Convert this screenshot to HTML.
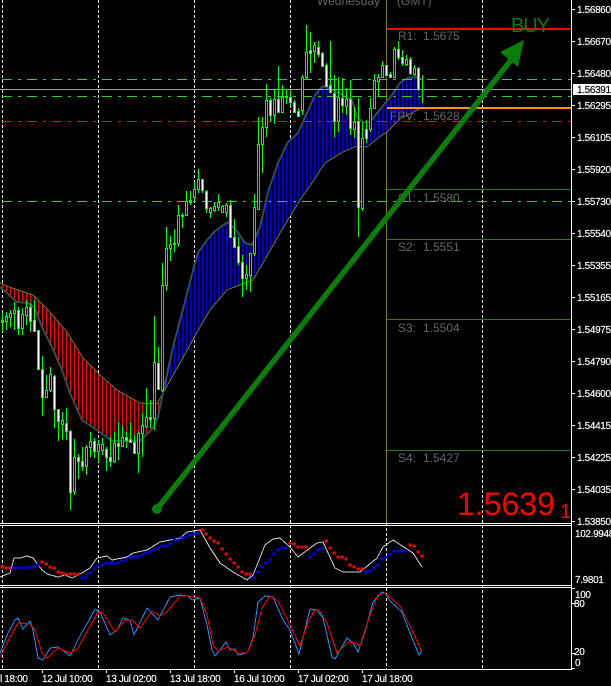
<!DOCTYPE html>
<html><head><meta charset="utf-8"><title>Chart</title>
<style>html,body{margin:0;padding:0;background:#000;width:611px;height:686px;overflow:hidden}svg{display:block}
text{font-family:"Liberation Sans",sans-serif}
.a text{font-size:10px;fill:#fff;stroke:#fff;stroke-width:.15px;letter-spacing:-.35px}
.p text{font-size:12px;fill:#666}
</style></head><body>
<svg width="611" height="686" viewBox="0 0 611 686" xmlns="http://www.w3.org/2000/svg">
<defs>
<pattern id="r" width="4" height="4" patternUnits="userSpaceOnUse"><rect x="2" width="1" height="4" fill="#f00"/></pattern>
<pattern id="b" width="4" height="4" patternUnits="userSpaceOnUse"><rect x="2" width="1" height="4" fill="#00f"/></pattern>
</defs>
<rect width="611" height="686" fill="#000"/>
<g fill="none" shape-rendering="crispEdges">
<path stroke="#fff" stroke-dasharray="3 2" d="M2.5 0V669M98.5 0V669M194.5 0V669M290.5 0V669M482.5 0V669M386.5 523V669"/>
<path stroke="#808000" d="M386.5 0V523"/>
<path stroke="#1e7d1e" d="M387 189.5H571M387 239.5H571M387 319.5H571M387 450.5H571"/>
<path stroke="#f00" stroke-width="2" d="M387 29H571"/>
</g>
<polygon fill="url(#r)" shape-rendering="crispEdges" points="0,283 12,288 33,295 48,310 67,332 83,358 100,375 117,390 140,403 157,404 160,399 160,405 158,417 153,428 140,441 112,441 97,430 82,420 70,393 62,370 52,347 42,327 35,308 28,303 17,302 7,293 0,287"/>
<polygon fill="url(#b)" shape-rendering="crispEdges" points="160,405 163,393 173,347 182,313 195,263 198,253 207,240 215,231 228,222 237,231 245,243 252,245 260,227 268,192 278,163 288,142 298,133 307,113 315,95 323,86 333,90 352,100 357,117 363,122 370,122 382,107 392,95 400,83 407,78 417,77 423,80 423,107 400,119 387,132 382,135 367,147 357,146 343,152 325,163 312,183 300,200 280,233 263,263 253,280 237,286 227,290 210,310 200,327 180,363 163,393"/>
<polyline fill="none" stroke="#76761a" stroke-width="1" shape-rendering="crispEdges" points="0,283 12,288 33,295 48,310 67,332 83,358 100,375 117,390 140,403 157,404 163,393 180,363 200,327 210,310 227,290 237,286 253,280 263,263 280,233 300,200 312,183 325,163 343,152 357,146 367,147 382,135 387,132 400,119 423,107"/>
<polyline fill="none" stroke="#2f4f4f" stroke-width="2" shape-rendering="crispEdges" points="0,287 7,293 17,302 28,303 35,308 42,327 52,347 62,370 70,393 82,420 97,430 112,441 140,441 153,428 158,417 163,393 173,347 182,313 195,263 198,253 207,240 215,231 228,222 237,231 245,243 252,245 260,227 268,192 278,163 288,142 298,133 307,113 315,95 323,86 333,90 352,100 357,117 363,122 370,122 382,107 392,95 400,83 407,78 417,77 423,80"/>
<g fill="none" shape-rendering="crispEdges">
<path stroke="#32cd32" stroke-dasharray="10 6 3 6" d="M2 79.5H571M2 96.5H571M2 201.5H571"/>
<path stroke="#dc1414" stroke-dasharray="10 6 3 6" d="M2 121.5H571"/>
<path stroke="#a0a0a0" d="M0 89.5H572"/>
<path stroke="#ff9000" stroke-width="2" d="M387 108H571"/>
<path stroke="#0f0" d="M2.5 313V332M6.5 312V330M10.5 310V327M14.5 302V330M18.5 307V335M22.5 308V335M26.5 300V325M30.5 303V332M34.5 300V332M38.5 330V370M42.5 356V416M46.5 375V397M50.5 367V392M54.5 375V428M58.5 409V441M62.5 412V440M66.5 408V440M70.5 430V510M74.5 439V495M78.5 454V479M82.5 447V471M86.5 445V475M90.5 432V457M94.5 438V458M98.5 440V462M102.5 438V455M106.5 447V471M110.5 437V467M114.5 432V463M118.5 422V460M122.5 425V447M126.5 432V448M130.5 422V443M134.5 435V453M138.5 432V473M142.5 413V457M146.5 388V428M150.5 400V428M154.5 316V430M158.5 347V390M162.5 263V392M166.5 227V291M170.5 236V261M174.5 229V252M178.5 205V247M182.5 213V228M186.5 191V216M190.5 191V205M194.5 182V201M198.5 169V193M202.5 179V193M206.5 190V213M210.5 207V218M214.5 202V212M218.5 194V211M222.5 205V213M226.5 203V217M230.5 200V237M234.5 219V248M238.5 237V265M242.5 255V297M246.5 265V290M250.5 253V292M254.5 194V256M258.5 117V210M262.5 117V173M266.5 84V137M270.5 98V122M274.5 90V124M278.5 66V113M282.5 85V113M286.5 89V104M290.5 90V107M294.5 100V113M298.5 108V117M302.5 75V115M306.5 25V80M310.5 32V73M314.5 42V63M318.5 41V57M322.5 52V67M326.5 63V87M330.5 41V93M334.5 75V137M338.5 77V132M342.5 78V113M346.5 88V115M350.5 80V135M354.5 107V138M358.5 98V237M362.5 122V211M366.5 120V143M370.5 98V132M374.5 74V108M378.5 74V97M382.5 61V78M386.5 65V76M390.5 72V78M394.5 47V78M398.5 41V60M402.5 50V66M406.5 55V66M410.5 57V75M414.5 65V76M418.5 67V91M422.5 75V103"/>
<path stroke="#0f0" stroke-width="3" d="M2.5 320V323M6.5 316V322M10.5 313V318M14.5 310V314M18.5 310V329M22.5 314V329M26.5 307V316M30.5 307V322M34.5 320V332M38.5 330V370M42.5 369V398M46.5 390V398M50.5 374V391M54.5 376V410M58.5 409V422M62.5 420V425M66.5 423V432M70.5 431V493M74.5 457V492M78.5 457V462M82.5 461V467M86.5 447V467M90.5 441V448M94.5 441V452M98.5 444V452M102.5 444V451M106.5 449V458M110.5 457V462M114.5 443V462M118.5 443V447M122.5 437V447M126.5 437V441M130.5 439V443M134.5 442V454M138.5 433V454M142.5 425V434M146.5 417V427M150.5 417V420M154.5 362V419M158.5 363V390M162.5 285V391M166.5 248V286M170.5 244V249M174.5 243V245M178.5 215V244M182.5 215V217M186.5 201V216M190.5 200V203M194.5 189V198M198.5 179V190M202.5 179V191M206.5 191V209M210.5 208V213M214.5 206V211M218.5 202V208M222.5 206V213M226.5 205V213M230.5 205V238M234.5 237V248M238.5 246V263M242.5 262V279M246.5 274V279M250.5 253V276M254.5 207V254M258.5 144V210M262.5 127V145M266.5 100V128M270.5 100V116M274.5 99V116M278.5 99V113M282.5 97V113M286.5 96V98M290.5 97V103M294.5 102V113M298.5 111V117M302.5 77V111M306.5 52V78M310.5 50V54M314.5 45V52M318.5 47V55M322.5 53V67M326.5 65V87M330.5 85V93M334.5 93V122M338.5 97V122M342.5 98V106M346.5 99V107M350.5 99V129M354.5 122V130M358.5 121V208M362.5 138V209M366.5 129V139M370.5 108V130M374.5 80V109M378.5 77V82M382.5 65V78M386.5 65V76M390.5 74V78M394.5 49V78M398.5 49V58M402.5 57V64M406.5 59V65M410.5 59V74M414.5 68V75M418.5 68V90"/>
<path stroke="#000" d="M6.5 317V321M10.5 314V317M14.5 311V313M22.5 315V328M26.5 308V315M46.5 391V397M50.5 375V390M62.5 421V424M74.5 458V491M86.5 448V466M90.5 442V447M98.5 445V451M102.5 445V450M114.5 444V461M122.5 438V446M138.5 434V453M142.5 426V433M146.5 418V426M154.5 363V418M162.5 286V390M166.5 249V285M170.5 245V248M178.5 216V243M186.5 202V215M194.5 190V197M198.5 180V189M210.5 209V212M214.5 207V210M218.5 203V207M222.5 207V212M226.5 206V212M246.5 275V278M250.5 254V275M254.5 208V253M258.5 145V209M262.5 128V144M266.5 101V127M274.5 100V115M282.5 98V112M302.5 78V110M306.5 53V77M314.5 46V51M338.5 98V121M346.5 100V106M354.5 123V129M362.5 139V208M370.5 109V129M374.5 81V108M378.5 78V81M382.5 66V77M394.5 50V77M406.5 60V64M414.5 69V74"/>
<path stroke="#fff" d="M18.5 311V328M30.5 308V321M34.5 321V331M38.5 331V369M42.5 370V397M54.5 377V409M58.5 410V421M66.5 424V431M70.5 432V492M78.5 458V461M82.5 462V466M94.5 442V451M106.5 450V457M110.5 458V461M118.5 444V446M126.5 438V440M130.5 440V442M134.5 443V453M150.5 418V419M158.5 364V389M202.5 180V190M206.5 192V208M230.5 206V237M234.5 238V247M238.5 247V262M242.5 263V278M270.5 101V115M278.5 100V112M290.5 98V102M294.5 103V112M298.5 112V116M310.5 51V53M318.5 48V54M322.5 54V66M326.5 66V86M330.5 86V92M334.5 94V121M342.5 99V105M350.5 100V128M358.5 122V207M366.5 130V138M386.5 66V75M390.5 75V77M398.5 50V57M402.5 58V63M410.5 60V73M418.5 69V89"/>
</g>
<g class="p">
<text x="317" y="5">Wednesday</text><text x="397" y="5">(GMT)</text>
<text x="398" y="40">R1:</text><text x="423" y="40">1.5675</text>
<text x="390" y="120">FPV:</text><text x="423" y="120">1.5628</text>
<text x="398" y="202">S1:</text><text x="423" y="202">1.5580</text>
<text x="398" y="251">S2:</text><text x="423" y="251">1.5551</text>
<text x="398" y="332">S3:</text><text x="423" y="332">1.5504</text>
<text x="398" y="462">S4:</text><text x="423" y="462">1.5427</text>
</g>
<text x="511" y="32" font-size="20" fill="#0b7b0b" textLength="39">BUY</text>
<line x1="157" y1="509" x2="511" y2="60" stroke="#0a7d0a" stroke-width="5.5"/>
<circle cx="157" cy="509" r="5" fill="#0a7d0a"/>
<polygon points="524,40 500,52 518,67" fill="#0a7d0a"/>
<text x="457" y="515" font-size="32" fill="#f00">1.5639</text>
<text x="560" y="518" font-size="20" fill="#f00">1</text>
<g fill="none" shape-rendering="crispEdges" stroke="#fff">
<path d="M0 523.5H572M0 525.5H572M0 585.5H572M0 587.5H572M0 669.5H572M571.5 0V670"/>
<path d="M572 9.5h3M572 41.5h3M572 73.5h3M572 105.5h3M572 137.5h3M572 169.5h3M572 201.5h3M572 233.5h3M572 265.5h3M572 297.5h3M572 329.5h3M572 361.5h3M572 393.5h3M572 425.5h3M572 457.5h3M572 489.5h3M572 521.5h3M572 588.5h3M572 603.5h3M572 653.5h3M572 668.5h3M42.5 670v3M106.5 670v3M170.5 670v3M234.5 670v3M298.5 670v3M362.5 670v3"/>
</g>
<rect x="573" y="84" width="38" height="11" fill="#fff"/>
<g class="a">
<text x="577" y="13">1.56860</text><text x="577" y="45">1.56670</text><text x="577" y="77">1.56480</text>
<text x="577" y="93" style="fill:#000;stroke:#000">1.56391</text>
<text x="577" y="109">1.56295</text><text x="577" y="141">1.56105</text><text x="577" y="173">1.55920</text><text x="577" y="205">1.55730</text><text x="577" y="237">1.55540</text><text x="577" y="269">1.55355</text><text x="577" y="301">1.55165</text><text x="577" y="333">1.54975</text><text x="577" y="365">1.54790</text><text x="577" y="397">1.54600</text><text x="577" y="429">1.54415</text><text x="577" y="461">1.54225</text><text x="577" y="493">1.54035</text><text x="577" y="525">1.53850</text>
<text x="575" y="537">102.9948</text><text x="575" y="583">7.9801</text><text x="575" y="598">100</text><text x="574" y="607">80</text><text x="574" y="655">20</text><text x="575" y="666">0</text>
<text x="-22" y="682">11 Jul 18:00</text><text x="42" y="682">12 Jul 10:00</text><text x="106" y="682">13 Jul 02:00</text><text x="170" y="682">13 Jul 18:00</text><text x="234" y="682">16 Jul 10:00</text><text x="298" y="682">17 Jul 02:00</text><text x="362" y="682">17 Jul 18:00</text>
</g>
<polyline fill="none" stroke="#d0d0d0" shape-rendering="crispEdges" points="0,577 10,573 14,558 20,558 27,556 33,558 42,570 47,574 58,577 65,575 72,578 82,573 90,568 97,558 107,556 112,560 127,557 133,553 147,550 160,542 180,538 187,532 200,530 210,548 220,563 233,572 247,580 253,575 265,545 273,539 280,538 290,547 298,557 317,543 323,542 335,568 343,572 353,572 360,572 377,558 383,547 393,540 413,553 422,567"/>
<path fill="none" stroke="#f00" stroke-width="3" stroke-linecap="square" shape-rendering="crispEdges" d="M2 567h.1M6 568h.1M10 568h.1M42 562h.1M46 564h.1M50 567h.1M54 568h.1M58 572h.1M62 573h.1M66 574h.1M70 574h.1M74 574h.1M78 574h.1M202 530h.1M206 534h.1M210 538h.1M214 541h.1M218 543h.1M222 549h.1M226 554h.1M230 559h.1M234 563h.1M238 567h.1M242 572h.1M246 574h.1M250 574h.1M290 543h.1M294 544h.1M298 547h.1M302 547h.1M306 547h.1M326 541h.1M330 548h.1M334 553h.1M338 557h.1M342 557h.1M346 559h.1M350 565h.1M354 567h.1M358 569h.1M362 569h.1M410 545h.1M414 546h.1M418 552h.1M422 556h.1"/>
<path fill="none" stroke="#00f" stroke-width="3" stroke-linecap="square" shape-rendering="crispEdges" d="M14 568h.1M18 568h.1M22 568h.1M26 568h.1M30 567h.1M34 567h.1M38 565h.1M82 578h.1M86 577h.1M90 573h.1M94 569h.1M98 566h.1M102 565h.1M106 563h.1M110 563h.1M114 563h.1M118 563h.1M122 561h.1M126 560h.1M130 557h.1M134 557h.1M138 557h.1M142 555h.1M146 553h.1M150 552h.1M154 550h.1M158 548h.1M162 546h.1M166 546h.1M170 544h.1M174 540h.1M178 540h.1M182 538h.1M186 537h.1M190 535h.1M194 534h.1M198 533h.1M254 578h.1M258 572h.1M262 567h.1M266 563h.1M270 560h.1M274 554h.1M278 550h.1M282 548h.1M286 548h.1M310 557h.1M314 554h.1M318 550h.1M322 548h.1M366 572h.1M370 571h.1M374 568h.1M378 565h.1M382 559h.1M386 557h.1M390 554h.1M394 551h.1M398 551h.1M402 551h.1M406 551h.1"/>
<polyline fill="none" stroke="#1e90ff" shape-rendering="crispEdges" points="0,653 8,633 15,620 18,618 23,629 30,621 33,630 38,658 43,660 50,648 58,647 65,652 70,656 82,632 88,622 95,609 100,612 110,635 117,630 123,618 130,620 134,635 147,608 158,620 170,597 180,595 188,596 192,600 200,598 207,625 212,650 215,656 220,650 226,642 230,650 235,649 238,655 247,653 253,638 258,602 265,596 273,597 283,620 290,630 299,654 310,609 317,610 323,618 332,657 335,659 347,638 353,643 358,652 365,632 373,602 382,592 385,593 390,601 402,612 412,638 419,655 422,650"/>
<polyline fill="none" stroke="#f00" shape-rendering="crispEdges" points="0,657 7,643 18,623 30,624 35,630 42,653 47,658 58,648 70,653 78,648 98,612 103,613 115,632 125,620 132,620 140,628 152,611 160,616 167,612 180,596 188,596 200,598 207,615 213,645 218,651 228,647 238,653 247,653 255,635 262,608 270,596 278,601 290,625 300,646 308,622 315,610 319,610 327,623 337,653 348,642 355,643 360,646 370,615 378,595 385,593 400,606 412,630 422,652"/>
</svg>
</body></html>
